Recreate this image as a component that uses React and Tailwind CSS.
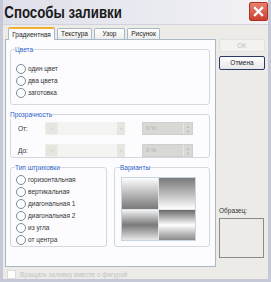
function Radio({ label }) {
  return (
    <div className="flex items-center gap-[2px] h-[12px]">
      <span className="w-[10px] h-[10px] rounded-full border border-[#7a8a99] bg-white shrink-0"></span>
      <span className="text-[#333]">{label}</span>
    </div>
  );
}

function Group({ title, className, children }) {
  return (
    <fieldset className={`border border-[#d4d8dc] rounded-[3px] ${className}`}>
      <legend className="text-[#2a5fc8] ml-[-1px] leading-[9px]">{title}</legend>
      {children}
    </fieldset>
  );
}

function SliderRow({ label }) {
  return (
    <div className="flex items-center h-[13px]">
      <span className="w-[34px] pl-[7px] text-[#333]">{label}</span>
      <div className="flex h-[13px] w-[80px]">
        <div className="w-[13px] h-full bg-[#e6e6e0] border border-[#eeeeea] flex items-center justify-center text-[#b8b8b8] text-[6px]">‹</div>
        <div className="flex-1 bg-[#f4f4f2]"></div>
        <div className="w-[8px] h-full bg-[#e6e6e0] flex items-center justify-center text-[#b8b8b8] text-[6px]">›</div>
      </div>
      <div className="ml-[17px] w-[51px] h-[13px] bg-[#d8d8d4] border border-[#cfcfcb] flex items-center justify-between pl-[3px]">
        <span className="text-[#b0b0b0] text-[6px]">0 %</span>
        <span className="w-[9px] h-full border-l border-[#e8e8e6] flex flex-col items-center justify-center text-[4px] text-[#b8b8b8] leading-[5px]">
          <span>▲</span>
          <span>▼</span>
        </span>
      </div>
    </div>
  );
}

export default function App() {
  return (
    <div
      className="w-[271px] h-[282px] bg-[#ecebe7] border-l-[3px] border-b-[3px] border-r-[3px] border-[#c5c8d6] flex flex-col text-[6.5px] overflow-hidden"
      style={{ fontFamily: '"Liberation Sans", Arial, sans-serif' }}
    >
      <div className="h-[27px] bg-gradient-to-r from-[#dfdfea] to-[#f2f2f6] flex items-start justify-between pl-[2px] pr-[2px] pt-[2px] -ml-[3px] -mr-[3px] border-b border-[#d2d2dc]">
        <span className="text-[17px] font-bold text-[#1a1a1a] leading-[21px] pl-[3px] origin-left scale-x-[0.78] whitespace-nowrap">
          Способы заливки
        </span>
        <div className="w-[19px] h-[19px] bg-gradient-to-b from-[#e88070] to-[#c8402e] border border-[#b03020] rounded-[2px] flex items-center justify-center mr-[1px]">
          <svg width="11" height="11" viewBox="0 0 11 11">
            <path d="M2 2 L9 9 M9 2 L2 9" stroke="white" strokeWidth="2.4" strokeLinecap="square" />
          </svg>
        </div>
      </div>

      <div className="flex flex-1">
        <div className="flex flex-col pl-[2px] pt-[2px] w-[213px]">
          <div className="flex items-end h-[12px] gap-[2px] pl-[3px]">
            <div className="h-[13px] w-[47px] bg-[#fcfcfe] border border-[#a9b8c6] border-b-0 border-t-2 border-t-[#f0b030] rounded-t-[2px] flex items-center justify-center text-[#222] relative top-[1px] z-10">
              Градиентная
            </div>
            <div className="h-[11px] w-[35px] bg-gradient-to-b from-white to-[#ececea] border border-[#a9b8c6] border-b-0 rounded-t-[2px] flex items-center justify-center text-[#222]">
              Текстура
            </div>
            <div className="h-[11px] w-[31px] bg-gradient-to-b from-white to-[#ececea] border border-[#a9b8c6] border-b-0 rounded-t-[2px] flex items-center justify-center text-[#222]">
              Узор
            </div>
            <div className="h-[11px] w-[33px] bg-gradient-to-b from-white to-[#ececea] border border-[#a9b8c6] border-b-0 rounded-t-[2px] flex items-center justify-center text-[#222]">
              Рисунок
            </div>
          </div>

          <div className="h-[228px] bg-[#fcfcfe] border border-[#a9b8c6] flex flex-col gap-[5px] pl-[4px] pr-[5px] pt-[5px]">
            <Group title="Цвета" className="h-[60px] pl-[5px] pt-[9px] flex flex-col">
              <Radio label="один цвет" />
              <Radio label="два цвета" />
              <Radio label="заготовка" />
            </Group>

            <Group title="Прозрачность" className="h-[48px] pt-[3px] flex flex-col gap-[9px]">
              <SliderRow label="От:" />
              <SliderRow label="До:" />
            </Group>

            <div className="flex gap-[7px]">
              <Group title="Тип штриховки" className="w-[97px] h-[84px] pl-[5px] pt-[2px] flex flex-col">
                <Radio label="горизонтальная" />
                <Radio label="вертикальная" />
                <Radio label="диагональная 1" />
                <Radio label="диагональная 2" />
                <Radio label="из угла" />
                <Radio label="от центра" />
              </Group>
              <Group title="Варианты" className="flex-1 h-[84px] pl-[6px] pt-[5px]">
                <div className="grid grid-cols-2 w-[75px] h-[64px] border border-[#c8d4e0] gap-[1px] bg-[#dfe6ee]">
                  <div className="bg-gradient-to-b from-white to-[#7a7a7a]"></div>
                  <div className="bg-gradient-to-b from-[#7a7a7a] to-white"></div>
                  <div className="bg-gradient-to-b from-[#f4f4f4] via-[#7a7a7a] to-[#e8e8e8]"></div>
                  <div className="bg-gradient-to-b from-[#6a6a6a] via-white to-[#8a8a8a]"></div>
                </div>
              </Group>
            </div>
          </div>

          <div className="flex items-center gap-[4px] pl-[2px] pt-[3px] h-[12px]">
            <span className="w-[9px] h-[9px] bg-white border border-[#dcdcdc]"></span>
            <span className="text-[#c4c4c4]">Вращать заливку вместе с фигурой</span>
          </div>
        </div>

        <div className="flex flex-col pl-[3px] pt-[14px] w-[49px]">
          <div className="w-[46px] h-[13px] bg-[#f2f2ee] border border-[#e2e2de] rounded-[2px] flex items-center justify-center text-[#c0c0c0]">
            OK
          </div>
          <div className="mt-[4px] w-[46px] h-[14px] bg-gradient-to-b from-white to-[#e6e6ea] border border-[#2c3a66] rounded-[2px] flex items-center justify-center text-[#222]">
            Отмена
          </div>
          <div className="mt-[136px] text-[#333]">Образец:</div>
          <div className="mt-[2px] w-[45px] h-[40px] border border-[#8a8a88] bg-[#ecebe7]"></div>
        </div>
      </div>
    </div>
  );
}
